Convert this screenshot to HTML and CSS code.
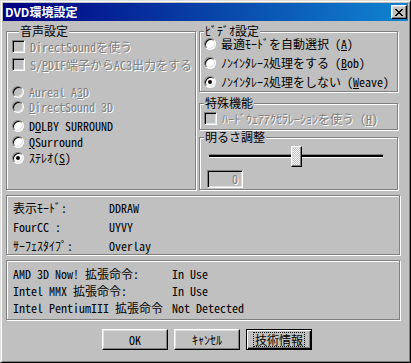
FILE: index.html
```html
<!doctype html>
<html lang="ja">
<head>
    <meta charset="utf-8">
    <title>DVD環境設定</title>
    <link rel="stylesheet" href="styles.css">
</head>
<body>
    <div class="window">
        <div class="titlebar">
            <span class="title">DVD環境設定</span>
            <button class="close-btn" title="閉じる">
                <svg width="8" height="7" viewBox="0 0 8 7">
                    <path fill="#000" d="M0 0h2v1h-2zM6 0h2v1h-2zM1 1h2v1h-2zM5 1h2v1h-2zM2 2h4v1h-4zM3 3h2v1h-2zM2 4h4v1h-4zM1 5h2v1h-2zM5 5h2v1h-2zM0 6h2v1h-2zM6 6h2v1h-2z"/>
                </svg>
            </button>
        </div>

        <div class="content">
            <div class="top-row">
                <!-- audio -->
                <fieldset class="group audio">
                    <legend>音声設定</legend>

                    <div class="opt-list checks">
                        <div class="opt disabled"><span class="check"></span><span>DirectSoundを使う</span></div>
                        <div class="opt disabled"><span class="check"></span><span>S/<u>P</u>DIF端子からAC3出力をする</span></div>
                    </div>

                    <div class="opt-list radios-3d">
                        <div class="opt disabled"><span class="radio"></span><span>Aureal A<u>3</u>D</span></div>
                        <div class="opt disabled"><span class="radio"></span><span><u>D</u>irectSound 3D</span></div>
                    </div>

                    <div class="opt-list radios">
                        <div class="opt"><span class="radio"></span><span>D<u>O</u>LBY SURROUND</span></div>
                        <div class="opt"><span class="radio"></span><span><u>Q</u>Surround</span></div>
                        <div class="opt"><span class="radio on"></span><span>ｽﾃﾚｵ(<u>S</u>)</span></div>
                    </div>
                </fieldset>

                <div class="side">
                    <!-- video -->
                    <fieldset class="group video">
                        <legend>ﾋﾞﾃﾞｵ設定</legend>
                        <div class="opt-list">
                            <div class="opt"><span class="radio"></span><span>最適ﾓｰﾄﾞを自動選択 (<u>A</u>)</span></div>
                            <div class="opt"><span class="radio"></span><span>ﾉﾝｲﾝﾀﾚｰｽ処理をする (<u>B</u>ob)</span></div>
                            <div class="opt"><span class="radio on"></span><span>ﾉﾝｲﾝﾀﾚｰｽ処理をしない (<u>W</u>eave)</span></div>
                        </div>
                    </fieldset>

                    <fieldset class="group special">
                        <legend>特殊機能</legend>
                        <div class="opt disabled"><span class="check"></span><span>ﾊｰﾄﾞｳｪｱｱｸｾﾗﾚｰｼｮﾝを使う (<u>H</u>)</span></div>
                    </fieldset>

                    <fieldset class="group brightness">
                        <legend>明るさ調整</legend>
                        <div class="slider">
                            <div class="track"></div>
                            <div class="thumb" style="left: 82px"></div>
                        </div>
                        <div class="edit disabled">0</div>
                    </fieldset>
                </div>
            </div>

            <div class="panel display-info">
                <div class="info-row"><span class="key">表示ﾓｰﾄﾞ:</span><span>DDRAW</span></div>
                <div class="info-row"><span class="key">FourCC :</span><span>UYVY</span></div>
                <div class="info-row"><span class="key">ｻｰﾌｪｽﾀｲﾌﾟ:</span><span>Overlay</span></div>
            </div>

            <div class="panel cpu-info">
                <div class="info-row"><span class="key">AMD 3D Now! 拡張命令:</span><span>In Use</span></div>
                <div class="info-row"><span class="key">Intel MMX 拡張命令:</span><span>In Use</span></div>
                <div class="info-row"><span class="key">Intel PentiumIII 拡張命令</span><span>Not Detected</span></div>
            </div>

            <div class="buttons">
                <button class="btn">OK</button>
                <button class="btn">ｷｬﾝｾﾙ</button>
                <button class="btn default"><span class="focus">技術情報</span></button>
            </div>
        </div>
    </div>
</body>
</html>
```

FILE: styles.css
```css
/* Win98 style dialog */
body {
    margin: 0;
    background: #c0c0c0;
    font-family: "Noto Sans Mono CJK JP", "Noto Sans CJK JP", monospace;
    font-size: 12px;
    color: #000;
}

.window {
    width: 411px;
    height: 363px;
    box-sizing: border-box;
    padding: 2px;
    background: #c0c0c0;
    border: 1px solid;
    border-color: #dfdfdf #000 #000 #dfdfdf;
    box-shadow: inset 1px 1px 0 #fff, inset -1px -1px 0 #808080;
}

/* title bar */
.titlebar {
    height: 18px;
    display: flex;
    align-items: center;
    justify-content: space-between;
    padding: 0 1px 0 2px;
    background: linear-gradient(to right, #000080, #1084d0);
}

.title {
    color: #fff;
    font-family: "Noto Sans CJK JP", sans-serif;
    font-weight: bold;
    font-size: 12px;
    line-height: 16px;
}

.close-btn {
    width: 16px;
    height: 14px;
    padding: 0;
    display: flex;
    align-items: center;
    justify-content: center;
    background: #c0c0c0;
    border: 1px solid;
    border-color: #fff #000 #000 #fff;
    box-shadow: inset -1px -1px 0 #808080, inset 1px 1px 0 #dfdfdf;
}

/* layout */
.content {
    padding: 6px 0 0 3px;
}

.top-row {
    display: flex;
    gap: 3px;
}

.side {
    width: 199px;
    display: flex;
    flex-direction: column;
}

/* group boxes */
.group {
    margin: 0;
    min-width: 0;
    padding: 0 4px;
    border: 1px solid #808080;
    box-shadow: inset 1px 1px 0 #fff, 1px 1px 0 #fff;
}

.group legend {
    margin-left: 0;
    padding: 0 1px;
    line-height: 8px;
    font-family: "Noto Sans CJK JP", sans-serif;
    background: #c0c0c0;
}

.audio {
    width: 190px;
    box-sizing: border-box;
    padding: 4px 5px 0;
}

.audio legend {
    margin-left: 7px;
}

.video {
    padding-top: 1px;
    padding-bottom: 2px;
}

.video .opt-list {
    gap: 4px;
}

.special {
    margin-top: 7px;
    padding-top: 4px;
    padding-bottom: 3px;
}

.brightness {
    flex: 1;
    margin-top: 3px;
    padding-top: 5px;
}

/* options */
.opt-list {
    display: flex;
    flex-direction: column;
}

.checks {
    gap: 3px;
}

.radios-3d {
    margin-top: 12px;
}

.radios {
    margin-top: 4px;
    gap: 1px;
}

.opt {
    height: 15px;
    line-height: 15px;
    display: flex;
    align-items: center;
    gap: 5px;
    white-space: nowrap;
}

.disabled {
    color: #808080;
    text-shadow: 1px 1px 0 #fff;
}

.check {
    flex: none;
    width: 13px;
    height: 13px;
    box-sizing: border-box;
    background: #fff;
    border: 1px solid;
    border-color: #808080 #fff #fff #808080;
    box-shadow: inset 1px 1px 0 #000, inset -1px -1px 0 #dfdfdf;
}

.disabled .check {
    background: #c0c0c0;
}

.radio {
    flex: none;
    position: relative;
    width: 12px;
    height: 12px;
    box-sizing: border-box;
    border-radius: 50%;
    background: #fff;
    border: 1px solid;
    border-color: #808080 #fff #fff #808080;
    box-shadow: inset 1px 1px 0 #000, inset -1px -1px 0 #dfdfdf;
}

.disabled .radio {
    background: #c0c0c0;
}

.radio.on::after {
    content: "";
    position: absolute;
    left: 3px;
    top: 3px;
    width: 4px;
    height: 4px;
    border-radius: 50%;
    background: #000;
}

/* slider */
.slider {
    position: relative;
    width: 174px;
    height: 21px;
    margin-left: 5px;
}

.track {
    position: absolute;
    left: 0;
    right: 0;
    top: 8px;
    height: 2px;
    background: #000;
    border-top: 1px solid #808080;
    border-bottom: 1px solid #fff;
}

.thumb {
    position: absolute;
    top: 0;
    width: 11px;
    height: 21px;
    box-sizing: border-box;
    border: 1px solid;
    border-color: #fff #000 #000 #fff;
    box-shadow: inset -1px -1px 0 #808080, inset 1px 1px 0 #dfdfdf;
    background: repeating-conic-gradient(#fff 0 25%, #c0c0c0 0 50%) 0 0 / 2px 2px;
}

.edit {
    width: 36px;
    height: 18px;
    box-sizing: border-box;
    margin: 3px 0 1px 3px;
    padding-right: 4px;
    text-align: right;
    line-height: 16px;
    border: 1px solid;
    border-color: #808080 #fff #fff #808080;
    box-shadow: inset 1px 1px 0 #000, inset -1px -1px 0 #dfdfdf;
}

/* info panels */
.panel {
    width: 394px;
    box-sizing: border-box;
    margin-top: 5px;
    padding: 4px 6px 1px;
    display: flex;
    flex-direction: column;
    gap: 4px;
    border: 1px solid #808080;
    box-shadow: inset 1px 1px 0 #fff, 1px 1px 0 #fff;
}

.cpu-info {
    padding: 5px 6px 4px;
    gap: 2px;
}

.info-row {
    display: flex;
    height: 15px;
    line-height: 15px;
    white-space: nowrap;
}

.display-info .key {
    width: 96px;
}

.cpu-info .key {
    width: 159px;
}

/* buttons */
.buttons {
    display: flex;
    justify-content: center;
    gap: 6px;
    margin-top: 9px;
}

.btn {
    width: 66px;
    height: 21px;
    padding: 0;
    font: inherit;
    color: #000;
    background: #c0c0c0;
    border: 1px solid;
    border-color: #fff #000 #000 #fff;
    box-shadow: inset -1px -1px 0 #808080, inset 1px 1px 0 #dfdfdf;
}

.btn.default {
    border: 1px solid #000;
    box-shadow: inset 1px 1px 0 #fff, inset -1px -1px 0 #000, inset -2px -2px 0 #808080;
}

.focus {
    display: inline-block;
    padding: 0 1px;
    line-height: 13px;
    border: 1px dotted #000;
}
```
